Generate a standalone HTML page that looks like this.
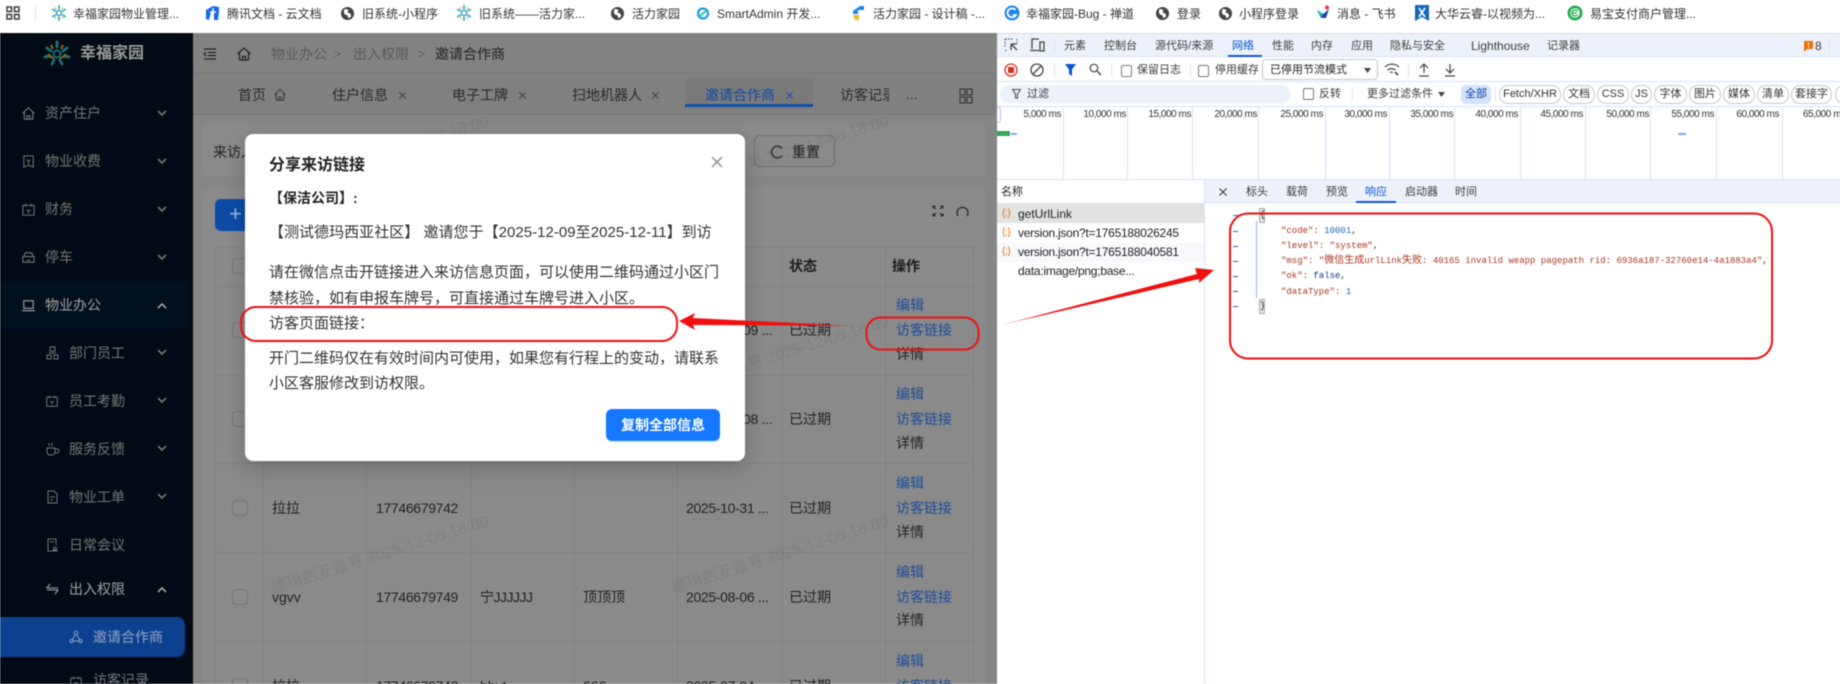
<!DOCTYPE html>
<html lang="zh-CN">
<head>
<meta charset="utf-8">
<title>邀请合作商</title>
<style>
html,body{margin:0;padding:0;width:1840px;height:684px;overflow:hidden;background:#fff}
body{position:relative;font-family:"Liberation Sans","Noto Sans CJK SC",sans-serif;font-size:14px;color:#222;filter:blur(.4px)}
div,span,svg{box-sizing:border-box}
.a{position:absolute}
.t{position:absolute;white-space:nowrap;line-height:20px;height:20px}
.bm{font-size:12px;color:#333}
.s{color:#767676}
.s2{color:#a2a2a2}
.d{font-size:11px;color:#3c3c3c}
.tl{position:absolute;top:107px;height:72px;width:1px;background:#d6e2f5}
.lb{position:absolute;top:108px;line-height:14px;font-size:10px;letter-spacing:-.45px;color:#333;white-space:nowrap;text-align:right;width:60px}
.pill{position:absolute;top:85px;height:19px;border:1px solid #c8c8c8;border-radius:9px;font-size:11px;line-height:17px;text-align:center;color:#333;white-space:nowrap}
.cb{position:absolute;width:11px;height:12px;border:1px solid #777;border-radius:2px;background:#fff}
.tc{position:absolute;width:16px;height:16px;border:1px solid #767676;border-radius:4px;left:232px}
.ln{color:#1d4c98}
.h{position:absolute;background:#818181;height:1px;left:215px;width:759px}
.v{position:absolute;background:#818181;width:1px;top:247px;height:437px}
.wm{position:absolute;font-size:16px;color:rgba(0,0,0,.07);white-space:nowrap;transform-origin:0 50%;transform:rotate(-17.5deg);line-height:20px}
.m{font-size:15px;color:#333;line-height:20px}
.js{position:absolute;left:1281px;font-family:"Liberation Mono","Noto Sans CJK SC",monospace;font-size:9px;line-height:14px;white-space:pre;color:#a8371f}
.dash{position:absolute;left:1233px;width:5px;height:1px;background:#2a62b8}
</style>
</head>
<body>
<svg width="0" height="0" style="position:absolute">
<defs>
<symbol id="home" viewBox="0 0 16 16"><path d="M1.500 8 8 2l6.500 6M3.500 6.500V14h9V6.500M6.500 14v-3.500h3V14" fill="none" stroke="currentColor" stroke-width="1.200"/></symbol>
<symbol id="globe" viewBox="0 0 16 16"><circle cx="8" cy="8" r="7" fill="#444"/><path d="M5 3l4 1-1 3 3 1 1 3-3 2-1-3-3-1-1-3z" fill="#fff"/></symbol>
<symbol id="snow" viewBox="0 0 16 16"><g stroke="#3bb4bd" stroke-width="1.900" stroke-linecap="round"><path d="M8 1v2.500M8 12.500V15M1.900 4.500l2.200 1.300M11.900 10.200l2.200 1.300M1.900 11.500l2.200-1.300M11.900 5.800l2.200-1.300"/></g><circle cx="8" cy="8" r="2.600" fill="none" stroke="#43a0c8" stroke-width="1.500"/><path d="M4 2.500l1 1.500M12 2.500l-1 1.500M4 13.500l1-1.500M12 13.500l-1-1.500" stroke="#d9a441" stroke-width="1.300"/></symbol>
<symbol id="down" viewBox="0 0 10 6"><path d="M1 1l4 4 4-4" fill="none" stroke="currentColor" stroke-width="1.600"/></symbol>
<symbol id="up" viewBox="0 0 10 6"><path d="M1 5l4-4 4 4" fill="none" stroke="currentColor" stroke-width="1.600"/></symbol>
<symbol id="x" viewBox="0 0 10 10"><path d="M1.500 1.500l7 7M8.500 1.500l-7 7" fill="none" stroke="currentColor" stroke-width="1"/></symbol>
<symbol id="cal" viewBox="0 0 16 16"><path d="M2 3.500h12V14H2zM5 2v3M11 2v3M6 8l2 2 2-2M8 10v2" fill="none" stroke="currentColor" stroke-width="1.100"/></symbol>
</defs>
</svg>

<!-- bookmarks -->
<div class="a" style="left:0;top:0;width:1840px;height:33px;background:#fff"></div>
<svg class="a" style="left:6px;top:6px" width="14" height="14" viewBox="0 0 14 14"><g fill="none" stroke="#444" stroke-width="1.600"><rect x="1" y="1" width="4.500" height="4.500"/><rect x="8.500" y="1" width="4.500" height="4.500"/><rect x="1" y="8.500" width="4.500" height="4.500"/><rect x="8.500" y="8.500" width="4.500" height="4.500"/></g></svg>
<div class="a" style="left:35px;top:5px;width:1px;height:16px;background:#d3e3fd"></div>
<svg class="a" style="left:51px;top:5px" width="16" height="16"><use href="#snow"/></svg><div class="t bm" style="left:73px;top:4px">幸福家园物业管理...</div>
<svg class="a" style="left:205px;top:5px" width="15" height="16" viewBox="0 0 15 16"><path d="M1 5 8 1l6 1v4l-1 9H9V7H6L4 15 1 14z" fill="#1668f0"/><path d="M8 3v10M5 7h6" stroke="#fff" stroke-width="1.400"/></svg><div class="t bm" style="left:227px;top:4px">腾讯文档 - 云文档</div>
<svg class="a" style="left:340px;top:6px" width="15" height="15"><use href="#globe"/></svg><div class="t bm" style="left:362px;top:4px">旧系统-小程序</div>
<svg class="a" style="left:456px;top:5px" width="16" height="16"><use href="#snow"/></svg><div class="t bm" style="left:479px;top:4px">旧系统——活力家...</div>
<svg class="a" style="left:610px;top:6px" width="15" height="15"><use href="#globe"/></svg><div class="t bm" style="left:632px;top:4px">活力家园</div>
<svg class="a" style="left:696px;top:7px" width="14" height="13" viewBox="0 0 14 13"><circle cx="7" cy="6.500" r="5" fill="none" stroke="#1e9be8" stroke-width="2.200"/><path d="M4 9l6-5" stroke="#1ec8b8" stroke-width="2"/></svg><div class="t bm" style="left:717px;top:4px">SmartAdmin 开发...</div>
<svg class="a" style="left:851px;top:5px" width="14" height="16" viewBox="0 0 14 16"><path d="M2 6 9 1h4v4H7v4H2z" fill="#1a84f0"/><path d="M2 10h6v5H4z" fill="#f5b82a"/></svg><div class="t bm" style="left:873px;top:4px">活力家园 - 设计稿 -...</div>
<svg class="a" style="left:1004px;top:5px" width="16" height="16" viewBox="0 0 16 16"><circle cx="8" cy="8" r="7.500" fill="#1a86e8"/><path d="M11.500 5A4.500 4.500 0 1 0 12 10H8.500" fill="none" stroke="#fff" stroke-width="1.800"/></svg><div class="t bm" style="left:1026px;top:4px">幸福家园-Bug - 禅道</div>
<svg class="a" style="left:1155px;top:6px" width="15" height="15"><use href="#globe"/></svg><div class="t bm" style="left:1177px;top:4px">登录</div>
<svg class="a" style="left:1218px;top:6px" width="15" height="15"><use href="#globe"/></svg><div class="t bm" style="left:1239px;top:4px">小程序登录</div>
<svg class="a" style="left:1316px;top:5px" width="14" height="15" viewBox="0 0 14 15"><path d="M1 5 7 9l6-5-3 9H5z" fill="#2545b8"/><path d="M1 5 7 9 5 13z" fill="#18b6a8"/><circle cx="11" cy="2.500" r="2" fill="#e83a3a"/></svg><div class="t bm" style="left:1337px;top:4px">消息 - 飞书</div>
<svg class="a" style="left:1414px;top:4px" width="16" height="18" viewBox="0 0 16 18"><path d="M1 1h14v16L8 13 1 17z" fill="#1668b8"/><path d="M5 4l6 9M11 4 5 13" stroke="#fff" stroke-width="1.600"/></svg><div class="t bm" style="left:1435px;top:4px">大华云睿-以视频为...</div>
<svg class="a" style="left:1567px;top:5px" width="16" height="16" viewBox="0 0 16 16"><circle cx="8" cy="8" r="7.500" fill="#22ac50"/><circle cx="8" cy="8" r="4.800" fill="#fff"/><path d="M10.500 6.500a3 3 0 1 0 0 3M5.500 8h4" fill="none" stroke="#22ac50" stroke-width="1.300"/></svg><div class="t bm" style="left:1590px;top:4px">易宝支付商户管理...</div>
<div class="a" style="left:0;top:33px;width:997px;height:1px;background:#d8d8d8"></div>

<!-- sidebar -->
<div class="a" style="left:0;top:33px;width:193px;height:651px;background:#010a15"></div>
<div class="a" style="left:0;top:281px;width:189px;height:48px;background:#020f1f"></div>
<svg class="a" style="left:43px;top:40px" width="28" height="28" viewBox="0 0 28 28"><g stroke="#1d6a74" stroke-width="3" stroke-linecap="round" fill="none"><path d="M14 2v5M4 8l4 3M24 8l-4 3M2 17l5-1M26 17l-5-1M9 24l2-4M19 24l-2-4"/></g><circle cx="14" cy="14" r="3.500" fill="none" stroke="#1d6a74" stroke-width="2"/><path d="M8 5l2 4M20 5l-2 4M5 14c2 3 4 4 6 4M23 14c-2 3-4 4-6 4" fill="none" stroke="#8a6a1e" stroke-width="2"/></svg>
<div class="t" style="left:80px;top:44px;font-size:16px;font-weight:700;color:#9a9a9a">幸福家园</div>

<svg class="a" style="left:21px;top:106px;color:#767676" width="15" height="15"><use href="#home"/></svg><div class="t s" style="left:45px;top:103px">资产住户</div>
<svg class="a" style="left:157px;top:110px;color:#767676" width="10" height="6"><use href="#down"/></svg>
<svg class="a" style="left:21px;top:154px;color:#767676" width="15" height="15" viewBox="0 0 16 16"><path d="M3 2h10v12l-5-2-5 2zM6 6l2 2 2-2M8 8v3" fill="none" stroke="currentColor" stroke-width="1.100"/></svg><div class="t s" style="left:45px;top:151px">物业收费</div>
<svg class="a" style="left:157px;top:158px;color:#767676" width="10" height="6"><use href="#down"/></svg>
<svg class="a" style="left:21px;top:202px;color:#767676" width="15" height="15"><use href="#cal"/></svg><div class="t s" style="left:45px;top:199px">财务</div>
<svg class="a" style="left:157px;top:206px;color:#767676" width="10" height="6"><use href="#down"/></svg>
<svg class="a" style="left:21px;top:250px;color:#767676" width="15" height="15" viewBox="0 0 16 16"><path d="M3 7l1.500-4h7L13 7M2 7h12v6H2zM6 11h4" fill="none" stroke="currentColor" stroke-width="1.100"/></svg><div class="t s" style="left:45px;top:247px">停车</div>
<svg class="a" style="left:157px;top:254px;color:#767676" width="10" height="6"><use href="#down"/></svg>
<svg class="a" style="left:21px;top:298px;color:#a2a2a2" width="15" height="15" viewBox="0 0 16 16"><path d="M3 3h10v8H3zM1 13.500h14" fill="none" stroke="currentColor" stroke-width="1.200"/></svg><div class="t s2" style="left:45px;top:295px">物业办公</div>
<svg class="a" style="left:157px;top:303px;color:#a2a2a2" width="10" height="6"><use href="#up"/></svg>

<svg class="a" style="left:46px;top:346px;color:#767676" width="13" height="14" viewBox="0 0 13 14"><path d="M4 1h5v4H4zM1 9h4v4H1zM8 9h4v4H8zM3 7h7" fill="none" stroke="currentColor"/></svg><div class="t s" style="left:69px;top:343px">部门员工</div>
<svg class="a" style="left:157px;top:349px;color:#767676" width="10" height="6"><use href="#down"/></svg>
<svg class="a" style="left:45px;top:394px;color:#767676" width="14" height="14"><use href="#cal"/></svg><div class="t s" style="left:69px;top:391px">员工考勤</div>
<svg class="a" style="left:157px;top:397px;color:#767676" width="10" height="6"><use href="#down"/></svg>
<svg class="a" style="left:46px;top:442px;color:#767676" width="14" height="14" viewBox="0 0 14 14"><path d="M1 6h8v4a3 3 0 0 1-3 3H4a3 3 0 0 1-3-3zM9 7h2a2 2 0 0 1 0 4H9M3 1v3M6 1v3" fill="none" stroke="currentColor"/></svg><div class="t s" style="left:69px;top:439px">服务反馈</div>
<svg class="a" style="left:157px;top:445px;color:#767676" width="10" height="6"><use href="#down"/></svg>
<svg class="a" style="left:46px;top:490px;color:#767676" width="13" height="14" viewBox="0 0 13 14"><path d="M2 1h6l3 3v9H2zM4 7h5M4 10h3" fill="none" stroke="currentColor"/></svg><div class="t s" style="left:69px;top:487px">物业工单</div>
<svg class="a" style="left:157px;top:493px;color:#767676" width="10" height="6"><use href="#down"/></svg>
<svg class="a" style="left:46px;top:538px;color:#767676" width="13" height="14" viewBox="0 0 13 14"><path d="M7 13H2V1h8v6M4 4h4M9 9a1.500 1.500 0 1 0 .1 0M7 13c0-2 4-2 4 0z" fill="none" stroke="currentColor"/></svg><div class="t s" style="left:69px;top:535px">日常会议</div>
<svg class="a" style="left:46px;top:582px;color:#a2a2a2" width="13" height="14" viewBox="0 0 13 14"><path d="M4 2 1 6h11M9 12l3-4H1" fill="none" stroke="currentColor" stroke-width="1.100"/></svg><div class="t s2" style="left:69px;top:579px">出入权限</div>
<svg class="a" style="left:157px;top:587px;color:#a2a2a2" width="10" height="6"><use href="#up"/></svg>
<div class="a" style="left:0;top:617px;width:185px;height:40px;background:#0d4190;border-radius:0 8px 8px 0"></div>
<svg class="a" style="left:69px;top:630px;color:#8e9ec0" width="14" height="14" viewBox="0 0 14 14"><circle cx="7" cy="3" r="1.800" fill="none" stroke="currentColor"/><circle cx="2.500" cy="11" r="1.500" fill="none" stroke="currentColor"/><circle cx="11.500" cy="11" r="1.500" fill="none" stroke="currentColor"/><path d="M6 5 3.500 9.500M8 5l2.500 4.500M4 11h6" stroke="currentColor" fill="none"/></svg><div class="t" style="left:93px;top:627px;color:#92a3c4">邀请合作商</div>
<svg class="a" style="left:69px;top:675px;color:#767676" width="14" height="14"><use href="#cal"/></svg><div class="t s" style="left:93px;top:670px">访客记录</div>

<!-- main -->
<div class="a" style="left:193px;top:33px;width:804px;height:651px;background:#868686"></div>
<div class="a" style="left:193px;top:33px;width:804px;height:40px;background:#828282;border-bottom:1px solid #797979"></div>
<div class="a" style="left:193px;top:73px;width:804px;height:42px;background:#808080;border-bottom:1px solid #797979"></div>

<svg class="a" style="left:203px;top:48px" width="14" height="12" viewBox="0 0 14 12"><path d="M1 1h12M5 4.500h8M5 7.500h8M1 11h12M3 4 1 6l2 2" fill="none" stroke="#222" stroke-width="1.200"/></svg>
<svg class="a" style="left:236px;top:46px;color:#222" width="16" height="16"><use href="#home"/></svg>
<div class="t" style="left:271px;top:44px;color:#5a5a5a">物业办公</div>
<div class="t" style="left:334px;top:44px;color:#5a5a5a;font-size:12px">&gt;</div>
<div class="t" style="left:353px;top:44px;color:#5a5a5a">出入权限</div>
<div class="t" style="left:418px;top:44px;color:#5a5a5a;font-size:12px">&gt;</div>
<div class="t" style="left:435px;top:44px;color:#222">邀请合作商</div>

<div class="a" style="left:685px;top:78px;width:128px;height:29px;background:#7a7a7a;border-radius:6px 6px 0 0;border-bottom:3px solid #0d4ea8"></div>
<div class="t" style="left:238px;top:85px;color:#2a2a2a">首页</div>
<svg class="a" style="left:273px;top:88px;color:#3a3a3a" width="14" height="14"><use href="#home"/></svg>
<div class="t" style="left:332px;top:85px;color:#2a2a2a">住户信息</div><svg class="a" style="left:398px;top:91px;color:#3a3a3a" width="9" height="9"><use href="#x"/></svg>
<div class="t" style="left:452px;top:85px;color:#2a2a2a">电子工牌</div><svg class="a" style="left:518px;top:91px;color:#3a3a3a" width="9" height="9"><use href="#x"/></svg>
<div class="t" style="left:572px;top:85px;color:#2a2a2a">扫地机器人</div><svg class="a" style="left:651px;top:91px;color:#3a3a3a" width="9" height="9"><use href="#x"/></svg>
<div class="t" style="left:705px;top:85px;color:#0f4aa3">邀请合作商</div><svg class="a" style="left:785px;top:91px;color:#0f4aa3" width="9" height="9"><use href="#x"/></svg>
<div class="a" style="left:840px;top:85px;width:49px;height:20px;overflow:hidden;line-height:20px;white-space:nowrap;color:#2a2a2a">访客记录</div>
<div class="t" style="left:906px;top:84px;color:#333">...</div>
<svg class="a" style="left:959px;top:88px" width="14" height="16" viewBox="0 0 14 16"><g fill="none" stroke="#333" stroke-width="1.100"><rect x="1" y="1" width="5" height="6"/><rect x="8" y="1" width="5" height="6"/><rect x="1" y="9" width="5" height="6"/><rect x="8" y="9" width="5" height="6"/></g></svg>

<div class="a" style="left:203px;top:125px;width:783px;height:52px;background:#8a8a8a;border-radius:4px"></div>
<div class="t" style="left:213px;top:142px;color:#222">来访人</div>
<div class="a" style="left:754px;top:135px;width:81px;height:32px;border:1px solid #6e6e6e;border-radius:6px"></div>
<svg class="a" style="left:770px;top:145px" width="14" height="14" viewBox="0 0 14 14"><path d="M12 3.500A5.800 5.800 0 1 0 12 10.500" fill="none" stroke="#222" stroke-width="1.200"/></svg>
<div class="t" style="left:792px;top:142px;color:#222">重置</div>

<div class="a" style="left:203px;top:187px;width:783px;height:497px;background:#8a8a8a;border-radius:8px 8px 0 0"></div>
<div class="a" style="left:215px;top:199px;width:60px;height:32px;background:#0e4ba6;border-radius:6px"></div>
<div class="t" style="left:229px;top:204px;color:#9db4d8;font-size:22px">+</div>
<svg class="a" style="left:932px;top:205px" width="12" height="12" viewBox="0 0 12 12"><path d="M1 1l3 3M11 1 8 4M1 11l3-3M11 11 8 8M1 1h2.500M1 1v2.500M11 1H8.500M11 1v2.500M1 11h2.500M1 11V8.500M11 11H8.500M11 11V8.500" fill="none" stroke="#222" stroke-width="1.100"/></svg>
<svg class="a" style="left:956px;top:204px" width="13" height="13" viewBox="0 0 13 13"><path d="M2 12A5.500 5.500 0 1 1 11 12" fill="none" stroke="#222" stroke-width="1.200"/></svg>

<!-- table -->
<div class="h" style="top:247px"></div><div class="h" style="top:286px"></div><div class="h" style="top:375px"></div><div class="h" style="top:463px"></div><div class="h" style="top:552px"></div><div class="h" style="top:641px"></div>
<div class="v" style="left:215px"></div><div class="v" style="left:263px"></div><div class="v" style="left:366px"></div><div class="v" style="left:471px"></div><div class="v" style="left:574px"></div><div class="v" style="left:677px"></div><div class="v" style="left:782px"></div><div class="v" style="left:885px"></div><div class="v" style="left:973px"></div>

<div class="tc" style="top:258px"></div><div class="tc" style="top:322px"></div><div class="tc" style="top:411px"></div><div class="tc" style="top:500px"></div><div class="tc" style="top:589px"></div><div class="tc" style="top:678px"></div>

<div class="t" style="left:789px;top:256px;font-weight:700;color:#1c1c1c">状态</div>
<div class="t" style="left:892px;top:256px;font-weight:700;color:#1c1c1c">操作</div>

<div class="t" style="left:743px;top:320px;letter-spacing:-.3px">09 ...</div>
<div class="t" style="left:789px;top:320px">已过期</div>
<div class="t ln" style="left:896px;top:295px">编辑</div><div class="t ln" style="left:896px;top:320px">访客链接</div><div class="t" style="left:896px;top:344px">详情</div>

<div class="t" style="left:743px;top:409px;letter-spacing:-.3px">08 ...</div>
<div class="t" style="left:789px;top:409px">已过期</div>
<div class="t ln" style="left:896px;top:384px">编辑</div><div class="t ln" style="left:896px;top:409px">访客链接</div><div class="t" style="left:896px;top:433px">详情</div>

<div class="t" style="left:272px;top:498px">拉拉</div>
<div class="t" style="left:376px;top:498px;letter-spacing:-.33px">17746679742</div>
<div class="t" style="left:686px;top:498px;letter-spacing:-.33px">2025-10-31 ...</div>
<div class="t" style="left:789px;top:498px">已过期</div>
<div class="t ln" style="left:896px;top:473px">编辑</div><div class="t ln" style="left:896px;top:498px">访客链接</div><div class="t" style="left:896px;top:522px">详情</div>

<div class="t" style="left:272px;top:587px">vgvv</div>
<div class="t" style="left:376px;top:587px;letter-spacing:-.33px">17746679749</div>
<div class="t" style="left:480px;top:587px;letter-spacing:-.5px">宁JJJJJJ</div>
<div class="t" style="left:583px;top:587px">顶顶顶</div>
<div class="t" style="left:686px;top:587px;letter-spacing:-.33px">2025-08-06 ...</div>
<div class="t" style="left:789px;top:587px">已过期</div>
<div class="t ln" style="left:896px;top:562px">编辑</div><div class="t ln" style="left:896px;top:587px">访客链接</div><div class="t" style="left:896px;top:610px">详情</div>

<div class="t" style="left:272px;top:676px">拉拉</div>
<div class="t" style="left:376px;top:676px;letter-spacing:-.33px">17746679742</div>
<div class="t" style="left:480px;top:676px">hhvt</div>
<div class="t" style="left:583px;top:676px">666</div>
<div class="t" style="left:686px;top:676px;letter-spacing:-.33px">2025-07-04 ...</div>
<div class="t" style="left:789px;top:676px">已过期</div>
<div class="t ln" style="left:896px;top:651px">编辑</div><div class="t ln" style="left:896px;top:676px">访客链接</div>

<!-- watermarks -->
<div class="a" style="left:193px;top:33px;width:804px;height:651px;overflow:hidden">
<div class="wm" style="left:79px;top:147px">德玛西亚账号 2025-12-08 18:00</div>
<div class="wm" style="left:479px;top:147px">德玛西亚账号 2025-12-08 18:00</div>
<div class="wm" style="left:79px;top:347px">德玛西亚账号 2025-12-08 18:00</div>
<div class="wm" style="left:479px;top:347px">德玛西亚账号 2025-12-08 18:00</div>
<div class="wm" style="left:79px;top:547px">德玛西亚账号 2025-12-08 18:00</div>
<div class="wm" style="left:479px;top:547px">德玛西亚账号 2025-12-08 18:00</div>
</div>

<!-- modal -->
<div class="a" style="left:245px;top:134px;width:500px;height:327px;background:#fff;border-radius:8px;box-shadow:0 6px 16px rgba(0,0,0,.12),0 9px 28px rgba(0,0,0,.08)"></div>
<div class="t" style="left:269px;top:156px;font-size:16px;font-weight:700;color:#222">分享来访链接</div>
<svg class="a" style="left:710px;top:155px;color:#8a8a8a" width="14" height="14"><use href="#x"/></svg>
<div class="t" style="left:269px;top:188px;font-size:14px;font-weight:700;color:#222">【保洁公司】:</div>
<div class="t m" style="left:269px;top:223px;letter-spacing:.03px">【测试德玛西亚社区】 邀请您于【2025-12-09至2025-12-11】到访</div>
<div class="t m" style="left:269px;top:263px">请在微信点击开链接进入来访信息页面，可以使用二维码通过小区门</div>
<div class="t m" style="left:269px;top:289px">禁核验，如有申报车牌号，可直接通过车牌号进入小区。</div>
<div class="t m" style="left:269px;top:314px">访客页面链接：</div>
<div class="t m" style="left:269px;top:349px">开门二维码仅在有效时间内可使用，如果您有行程上的变动，请联系</div>
<div class="t m" style="left:269px;top:374px">小区客服修改到访权限。</div>
<div class="a" style="left:606px;top:409px;width:114px;height:32px;background:#1677ff;border-radius:6px;color:#fff;text-align:center;line-height:32px;font-weight:700;font-size:14px;box-shadow:0 2px 0 rgba(5,145,255,.1)">复制全部信息</div>

<!-- devtools -->
<div class="a" style="left:997px;top:33px;width:843px;height:651px;background:#fff"></div>
<div class="a" style="left:997px;top:33px;width:843px;height:24px;background:#edf2fa;border-top:1px solid #dcdcdc;border-bottom:1px solid #d3e3fd"></div>
<svg class="a" style="left:1004px;top:38px" width="15" height="14" viewBox="0 0 15 14"><path d="M1 1h8M1 1v9M1 12.500h3M13 1v4" fill="none" stroke="#444" stroke-dasharray="1.500 1.500"/><path d="M7 6h6M7 6v6M7 6l6 6" fill="none" stroke="#444" stroke-width="1.300"/></svg>
<svg class="a" style="left:1029px;top:38px" width="16" height="14" viewBox="0 0 16 14"><path d="M3 11V1h7M1 12.500h9M11 4h4v9h-4z" fill="none" stroke="#444" stroke-width="1.300"/></svg>
<div class="a" style="left:1054px;top:38px;width:1px;height:15px;background:#d3e3fd"></div>
<div class="t d" style="left:1064px;top:36px">元素</div>
<div class="t d" style="left:1104px;top:36px">控制台</div>
<div class="t d" style="left:1155px;top:36px;letter-spacing:.05px">源代码/来源</div>
<div class="t d" style="left:1232px;top:36px;color:#0b57d0">网络</div>
<div class="a" style="left:1228px;top:55px;width:34px;height:2px;background:#0b57d0"></div>
<div class="t d" style="left:1272px;top:36px">性能</div>
<div class="t d" style="left:1311px;top:36px">内存</div>
<div class="t d" style="left:1351px;top:36px">应用</div>
<div class="t d" style="left:1390px;top:36px">隐私与安全</div>
<div class="t d" style="left:1471px;top:36px;font-size:12px">Lighthouse</div>
<div class="t d" style="left:1547px;top:36px">记录器</div>
<svg class="a" style="left:1804px;top:41px" width="9" height="11" viewBox="0 0 9 11"><path d="M0 0h9v8H3l-3 3z" fill="#e8710a"/><path d="M4.500 1.500v3.500M4.500 6v1" stroke="#fff"/></svg>
<div class="t d" style="left:1815px;top:36px;font-size:12px">8</div>
<div class="a" style="left:1829px;top:38px;width:1px;height:14px;background:#d3e3fd"></div>

<svg class="a" style="left:1004px;top:63px" width="14" height="14" viewBox="0 0 14 14"><circle cx="7" cy="7" r="6" fill="none" stroke="#d93025" stroke-width="1.300"/><rect x="4" y="4" width="6" height="6" fill="#d93025"/></svg>
<svg class="a" style="left:1030px;top:63px" width="14" height="14" viewBox="0 0 14 14"><circle cx="7" cy="7" r="6" fill="none" stroke="#444" stroke-width="1.300"/><path d="M3 11 11 3" stroke="#444" stroke-width="1.300"/></svg>
<div class="a" style="left:1054px;top:63px;width:1px;height:14px;background:#d3e3fd"></div>
<svg class="a" style="left:1065px;top:63px" width="11" height="13" viewBox="0 0 11 13"><path d="M0 1h11L7 6.500V13L4 11V6.500z" fill="#0b57d0"/></svg>
<svg class="a" style="left:1089px;top:63px" width="13" height="13" viewBox="0 0 13 13"><circle cx="5" cy="5" r="3.800" fill="none" stroke="#444" stroke-width="1.200"/><path d="M8 8l4 4" stroke="#444" stroke-width="1.400"/></svg>
<div class="a" style="left:1111px;top:63px;width:1px;height:14px;background:#d3e3fd"></div>
<div class="cb" style="left:1121px;top:65px"></div>
<div class="t d" style="left:1137px;top:60px">保留日志</div>
<div class="a" style="left:1190px;top:63px;width:1px;height:14px;background:#d3e3fd"></div>
<div class="cb" style="left:1198px;top:65px"></div>
<div class="t d" style="left:1215px;top:60px">停用缓存</div>
<div class="a" style="left:1262px;top:59px;width:116px;height:21px;border:1px solid #c4c7c5;border-radius:4px"></div>
<div class="t d" style="left:1270px;top:60px;color:#222">已停用节流模式</div>
<svg class="a" style="left:1364px;top:68px" width="7" height="5" viewBox="0 0 7 5"><path d="M0 0h7L3.500 5z" fill="#444"/></svg>
<svg class="a" style="left:1384px;top:62px" width="16" height="15" viewBox="0 0 16 15"><path d="M1 5a10 10 0 0 1 14 0M3.500 8a6.500 6.500 0 0 1 8 0M6 10.500a3 3 0 0 1 3 0" fill="none" stroke="#444" stroke-width="1.200"/><path d="M11 10l3 3" stroke="#444" stroke-width="1.600"/></svg>
<div class="a" style="left:1408px;top:63px;width:1px;height:14px;background:#d3e3fd"></div>
<svg class="a" style="left:1418px;top:63px" width="12" height="14" viewBox="0 0 12 14"><path d="M6 10V1M2 5l4-4 4 4M1 13h10" fill="none" stroke="#444" stroke-width="1.200"/></svg>
<svg class="a" style="left:1444px;top:63px" width="12" height="14" viewBox="0 0 12 14"><path d="M6 1v9M2 6l4 4 4-4M1 13h10" fill="none" stroke="#444" stroke-width="1.200"/></svg>
<div class="a" style="left:997px;top:81px;width:843px;height:1px;background:#d3e3fd"></div>

<div class="a" style="left:1000px;top:85px;width:291px;height:18px;background:#edf2fa;border-radius:9px"></div>
<svg class="a" style="left:1012px;top:89px" width="9" height="10" viewBox="0 0 9 10"><path d="M.5.500h8L5.500 5v4h-2V5z" fill="none" stroke="#444"/></svg>
<div class="t d" style="left:1027px;top:84px">过滤</div>
<div class="cb" style="left:1303px;top:88px"></div>
<div class="t d" style="left:1319px;top:84px">反转</div>
<div class="a" style="left:1352px;top:87px;width:1px;height:14px;background:#d3e3fd"></div>
<div class="t d" style="left:1367px;top:84px">更多过滤条件</div>
<svg class="a" style="left:1438px;top:92px" width="7" height="5" viewBox="0 0 7 5"><path d="M0 0h7L3.500 5z" fill="#444"/></svg>
<div class="a" style="left:1461px;top:85px;width:30px;height:19px;background:#d3e3fd;border-radius:5px;text-align:center;font-size:11px;line-height:19px;color:#0b3c9c">全部</div>
<div class="a" style="left:1495px;top:87px;width:1px;height:14px;background:#d3e3fd"></div>
<div class="pill" style="left:1499px;width:62px">Fetch/XHR</div>
<div class="pill" style="left:1563px;width:32px">文档</div>
<div class="pill" style="left:1597px;width:32px">CSS</div>
<div class="pill" style="left:1631px;width:21px">JS</div>
<div class="pill" style="left:1654px;width:33px">字体</div>
<div class="pill" style="left:1689px;width:32px">图片</div>
<div class="pill" style="left:1723px;width:32px">媒体</div>
<div class="pill" style="left:1757px;width:32px">清单</div>
<div class="pill" style="left:1791px;width:41px">套接字</div>
<div class="pill" style="left:1835px;width:30px"></div>
<div class="a" style="left:997px;top:106px;width:843px;height:1px;background:#d3e3fd"></div>

<div class="a" style="left:997px;top:107px;width:4px;height:16px;border:1px solid #b8c8e8;border-left:0;border-radius:0 3px 3px 0"></div>
<div class="tl" style="left:1063px"></div><div class="tl" style="left:1127px"></div><div class="tl" style="left:1192px"></div><div class="tl" style="left:1258px"></div><div class="tl" style="left:1325px"></div><div class="tl" style="left:1389px"></div><div class="tl" style="left:1454px"></div><div class="tl" style="left:1520px"></div><div class="tl" style="left:1585px"></div><div class="tl" style="left:1650px"></div><div class="tl" style="left:1716px"></div><div class="tl" style="left:1782px"></div>
<div class="lb" style="left:1001px">5,000 ms</div><div class="lb" style="left:1066px">10,000 ms</div><div class="lb" style="left:1131px">15,000 ms</div><div class="lb" style="left:1197px">20,000 ms</div><div class="lb" style="left:1263px">25,000 ms</div><div class="lb" style="left:1327px">30,000 ms</div><div class="lb" style="left:1393px">35,000 ms</div><div class="lb" style="left:1458px">40,000 ms</div><div class="lb" style="left:1523px">45,000 ms</div><div class="lb" style="left:1589px">50,000 ms</div><div class="lb" style="left:1654px">55,000 ms</div><div class="lb" style="left:1719px">60,000 ms</div>
<div class="a" style="left:1803px;top:108px;line-height:14px;font-size:10px;letter-spacing:-.45px;color:#333;white-space:nowrap">65,000 ms</div>
<div class="a" style="left:997px;top:131px;width:13px;height:5px;background:#34a853"></div>
<div class="a" style="left:1011px;top:133px;width:6px;height:2px;background:#7baaf0"></div>
<div class="a" style="left:1678px;top:133px;width:8px;height:2px;background:#7baaf0"></div>
<div class="a" style="left:997px;top:179px;width:843px;height:1px;background:#d3e3fd"></div>

<div class="t d" style="left:1001px;top:182px;font-size:11px;color:#222">名称</div>
<div class="a" style="left:997px;top:203px;width:207px;height:1px;background:#d3e3fd"></div>
<div class="a" style="left:1204px;top:179px;width:1px;height:505px;background:#d3e3fd"></div>
<div class="a" style="left:1205px;top:180px;width:635px;height:23px;background:#edf2fa;border-bottom:1px solid #d3e3fd"></div>
<svg class="a" style="left:1218px;top:187px;color:#333" width="10" height="10"><use href="#x"/></svg>
<div class="t d" style="left:1246px;top:182px">标头</div>
<div class="t d" style="left:1286px;top:182px">载荷</div>
<div class="t d" style="left:1326px;top:182px">预览</div>
<div class="t d" style="left:1365px;top:182px;color:#0b57d0">响应</div>
<div class="a" style="left:1356px;top:201px;width:40px;height:2px;background:#0b57d0"></div>
<div class="t d" style="left:1405px;top:182px">启动器</div>
<div class="t d" style="left:1455px;top:182px">时间</div>

<div class="a" style="left:997px;top:204px;width:207px;height:19px;background:#e1e3e1"></div>
<div class="a" style="left:997px;top:243px;width:207px;height:19px;background:#f8f9fd"></div>
<div class="t" style="left:1002px;top:204px;font-size:10px;color:#e8710a;letter-spacing:-.3px">{;}</div>
<div class="t" style="left:1018px;top:204px;font-size:12px;color:#222">getUrlLink</div>
<div class="t" style="left:1002px;top:223px;font-size:10px;color:#e8710a;letter-spacing:-.3px">{;}</div>
<div class="t" style="left:1018px;top:223px;font-size:12px;color:#222;letter-spacing:-.25px">version.json?t=1765188026245</div>
<div class="t" style="left:1002px;top:242px;font-size:10px;color:#e8710a;letter-spacing:-.3px">{;}</div>
<div class="t" style="left:1018px;top:242px;font-size:12px;color:#222;letter-spacing:-.25px">version.json?t=1765188040581</div>
<div class="t" style="left:1018px;top:261px;font-size:12px;color:#222;letter-spacing:-.25px">data:image/png;base...</div>

<!-- code -->
<div class="dash" style="left:1233px;top:215px;background:#2a62b8"></div>
<div class="dash" style="top:231px"></div><div class="dash" style="top:246px"></div><div class="dash" style="top:261px"></div><div class="dash" style="top:276px"></div><div class="dash" style="top:291px"></div><div class="dash" style="top:306px"></div>
<div class="a" style="left:1256px;top:221px;width:1px;height:77px;background:#8fb0e8"></div>
<div class="a" style="left:1259px;top:208px;width:6px;height:15px;background:#e3e3e3;border:1px solid #aaa;font:9px/12px 'Liberation Mono',monospace;color:#222">{</div>
<div class="a" style="left:1259px;top:299px;width:6px;height:15px;background:#e3e3e3;border:1px solid #aaa;font:9px/12px 'Liberation Mono',monospace;color:#222">}</div>
<div class="js" style="top:224px">"code": <span style="color:#1967c2">10001</span><span style="color:#333">,</span></div>
<div class="js" style="top:239px">"level": "system"<span style="color:#333">,</span></div>
<div class="js" style="top:254px">"msg": "<span style="font-size:10px">微信生成</span>urlLink<span style="font-size:10px">失败</span>: 40165 invalid weapp pagepath rid: 6936a187-32760e14-4a1883a4"<span style="color:#333">,</span></div>
<div class="js" style="top:269px">"ok": <span style="color:#123a8a">false</span><span style="color:#333">,</span></div>
<div class="js" style="top:285px">"dataType": <span style="color:#1967c2">1</span></div>

<!-- annotations -->
<svg class="a" style="left:0;top:0" width="1840" height="684" viewBox="0 0 1840 684">
<defs>
<linearGradient id="g1" gradientUnits="userSpaceOnUse" x1="692" y1="322" x2="858" y2="326"><stop offset="0" stop-color="#f01010"/><stop offset=".7" stop-color="#f01010"/><stop offset="1" stop-color="#f01010" stop-opacity=".25"/></linearGradient>
<linearGradient id="g2" gradientUnits="userSpaceOnUse" x1="1197" y1="276" x2="997" y2="326"><stop offset="0" stop-color="#f01010"/><stop offset=".8" stop-color="#f01010"/><stop offset="1" stop-color="#f01010" stop-opacity=".25"/></linearGradient>
</defs>
<rect x="241" y="307" width="436" height="34" rx="15" fill="none" stroke="#f01010" stroke-width="2"/>
<rect x="866.500" y="317.500" width="112" height="32" rx="14" fill="none" stroke="#f01010" stroke-width="2"/>
<rect x="1230" y="213.500" width="542" height="145" rx="18" fill="none" stroke="#f01010" stroke-width="2"/>
<polygon points="679,321 695,313 693,318 858,326 693,325 695,330" fill="url(#g1)"/>
<polygon points="997,326 1197,274 1195,268 1214,270 1199,283 1199,279" fill="url(#g2)"/>
</svg>
</body>
</html>
